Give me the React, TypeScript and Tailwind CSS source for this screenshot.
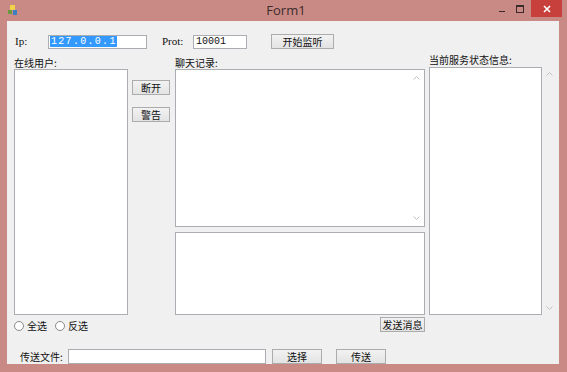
import React from 'react'

const cjk = "font-['SimSun','Noto_Sans_CJK_SC',sans-serif]"
const latin = "font-['Liberation_Serif','Noto_Sans_CJK_SC',serif]"
const mono = "font-['Liberation_Mono',monospace]"

function WinButton({ label, className = '' }: { label: string; className?: string }) {
  return (
    <div
      className={`flex items-center justify-center whitespace-nowrap h-[15px] border border-[#acacac] bg-gradient-to-b from-[#f2f2f2] to-[#e3e3e3] text-[10px] leading-none text-[#111] ${cjk} ${className}`}
    >
      {label}
    </div>
  )
}

function Chevron({ up }: { up?: boolean }) {
  return (
    <svg width="7" height="5" viewBox="0 0 7 5" className="block">
      <path d={up ? 'M0.5 4.5 L3.5 1.5 L6.5 4.5' : 'M0.5 0.5 L3.5 3.5 L6.5 0.5'} fill="none" stroke="#c2c2c2" strokeWidth="1" />
    </svg>
  )
}

function Radio({ label }: { label: string }) {
  return (
    <div className="flex items-center">
      <div className="w-[10px] h-[10px] rounded-full border border-[#8a8a8a] bg-white" />
      <span className={`ml-[3px] text-[10px] leading-none text-[#111] ${cjk}`}>{label}</span>
    </div>
  )
}

export default function App() {
  return (
    <div className="w-[567px] h-[372px] bg-[#c98a85] flex flex-col overflow-hidden">
      {/* Title bar */}
      <div className="h-[21px] flex items-center">
        <svg width="9" height="11" viewBox="0 0 9 11" className="ml-[8px]">
          <rect x="2" y="0" width="5" height="5" fill="#f2d24b" />
          <rect x="0" y="5" width="4" height="4" fill="#6b9a3e" />
          <rect x="5" y="5" width="4" height="5" fill="#3d7fc1" />
        </svg>
        <div className="flex-1 text-center text-[13px] text-[#3b2b2b] font-['Open_Sans',sans-serif] pl-[56px]">Form1</div>
        <div className="flex items-start self-start h-full">
          <div className="w-[6px] h-[1px] bg-[#3b2b2b] mt-[11px]" />
          <div className="ml-[11px] mt-[5px] w-[8px] h-[8px] border border-[#3b2b2b] border-t-2" />
          <div className="ml-[7px] w-[31px] h-[17px] bg-[#c7403b] flex items-center justify-center">
            <svg width="8" height="8" viewBox="0 0 8 8">
              <path d="M1 1 L7 7 M7 1 L1 7" stroke="#fff" strokeWidth="1.6" />
            </svg>
          </div>
        </div>
        <div className="w-[5px]" />
      </div>

      {/* Client area */}
      <div className="ml-[7px] w-[552px] h-[343px] bg-[#f0f0f0] flex flex-col">
        {/* Top row */}
        <div className="mt-[13px] h-[15px] flex items-center">
          <span className={`ml-[8px] w-[33px] text-[11px] text-[#111] ${latin}`}>Ip:</span>
          <div className="w-[99px] h-[14px] border border-[#abadb3] bg-white flex items-center px-[1px]">
            <span className={`bg-[#3399ff] text-white text-[10px] leading-[11px] tracking-[1.3px] pl-[1px] ${mono}`}>127.0.0.1</span>
          </div>
          <span className={`ml-[15px] w-[31px] text-[11px] text-[#111] ${latin}`}>Prot:</span>
          <div className={`w-[54px] h-[14px] border border-[#abadb3] bg-white flex items-center px-[2px] text-[10px] text-[#111] ${mono}`}>
            10001
          </div>
          <WinButton label="开始监听" className="ml-[24px] w-[63px]" />
        </div>

        {/* Main area */}
        <div className="flex items-start h-[304px]">
          {/* Online users */}
          <div className="ml-[7px] w-[114px] flex flex-col">
            <span className={`mt-[8px] h-[12px] text-[10px] leading-[12px] text-[#111] ${cjk}`}>在线用户:</span>
            <div className="h-[246px] border border-[#abadb3] bg-white" />
            <div className="mt-[5px] h-[11px] flex items-center gap-[8px]">
              <Radio label="全选" />
              <Radio label="反选" />
            </div>
          </div>

          {/* Actions */}
          <div className="ml-[4px] w-[38px] flex flex-col">
            <WinButton label="断开" className="mt-[31px]" />
            <WinButton label="警告" className="mt-[12px]" />
          </div>

          {/* Chat */}
          <div className="ml-[5px] w-[250px] flex flex-col">
            <span className={`mt-[8px] h-[12px] text-[10px] leading-[12px] text-[#111] ${cjk}`}>聊天记录:</span>
            <div className="h-[158px] border border-[#abadb3] bg-white flex justify-end">
              <div className="w-[15px] flex flex-col items-center justify-between py-[5px]">
                <Chevron up />
                <Chevron />
              </div>
            </div>
            <div className="mt-[5px] h-[83px] border border-[#abadb3] bg-white" />
            <WinButton label="发送消息" className="mt-[2px] w-[45px] self-end" />
          </div>

          {/* Server status */}
          <div className="ml-[4px] flex flex-col">
            <span className={`mt-[5px] h-[12px] text-[10px] leading-[12px] text-[#111] ${cjk}`}>当前服务状态信息:</span>
            <div className="mt-[1px] flex">
              <div className="w-[113px] h-[248px] border border-[#abadb3] bg-white" />
              <div className="w-[14px] flex flex-col items-center justify-between py-[4px]">
                <Chevron up />
                <Chevron />
              </div>
            </div>
          </div>
        </div>

        {/* File row */}
        <div className="mt-[14px] h-[15px] flex items-center">
          <span className={`ml-[13px] w-[48px] text-[10px] text-[#111] ${cjk}`}>传送文件:</span>
          <div className="w-[198px] h-[15px] border border-[#abadb3] bg-white" />
          <WinButton label="选择" className="ml-[6px] w-[50px]" />
          <WinButton label="传送" className="ml-[14px] w-[50px]" />
        </div>
      </div>
    </div>
  )
}
